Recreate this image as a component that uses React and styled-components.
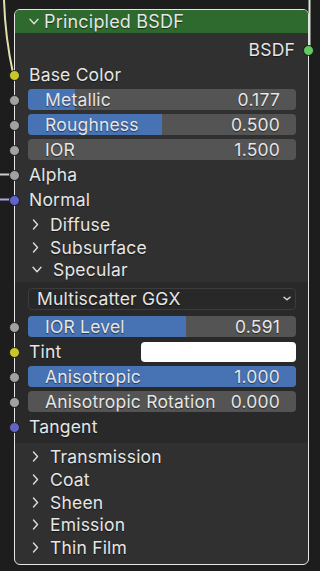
import React from 'react';
import styled, { createGlobalStyle } from 'styled-components';

const GlobalStyle = createGlobalStyle`
  html, body {
    margin: 0;
    background: #1d1d1d;
  }
  body {
    font-family: Inter, "Noto Sans", sans-serif;
  }
`;

const Canvas = styled.div`
  position: relative;
  width: 320px;
  height: 571px;
  overflow: hidden;
  padding: 9px 0 0 14px;
  box-sizing: border-box;
  background: #1d1d1d;
`;

const Wires = styled.svg`
  position: absolute;
  left: 0;
  top: 0;
  pointer-events: none;
`;

const Node = styled.div`
  position: relative;
  z-index: 1;
  width: 295px;
  box-sizing: border-box;
  border: 1px solid #e6e6e6;
  border-radius: 6px;
  background: #303030;
  color: #e6e6e6;
  font-size: 17.5px;
  letter-spacing: 0.2px;
  text-shadow: 0 1px 1px rgba(0, 0, 0, 0.55);
`;

const Header = styled.div`
  height: 23px;
  display: flex;
  align-items: center;
  gap: 5px;
  padding-left: 14px;
  font-size: 18px;
  background: #2e6a2e;
  border-radius: 5px 5px 0 0;
`;

const Body = styled.div`
  padding: 4px 0 5px;
`;

const Row = styled.div`
  position: relative;
  height: 25px;
  display: flex;
  align-items: center;
  justify-content: ${({ $output }) => ($output ? 'flex-end' : 'flex-start')};
  padding: ${({ $output }) => ($output ? '0 13px 0 0' : '0 12px 0 13px')};
`;

const Label = styled.span`
  padding-left: 1px;
  white-space: nowrap;
`;

const Socket = styled.span`
  position: absolute;
  top: 50%;
  ${({ $right }) => ($right ? 'right: -6px;' : 'left: -6px;')}
  width: 9px;
  height: 9px;
  margin-top: -5px;
  border-radius: 50%;
  background: ${({ $color }) => $color};
  border: 1px solid #1a1a1a;
`;

const Slider = styled.div`
  position: relative;
  flex: 1;
  height: 21px;
  border-radius: 4px;
  background: #545454;
  overflow: hidden;
  display: flex;
  align-items: center;
  justify-content: space-between;
  padding: 0 16px 0 17px;
`;

const Fill = styled.span`
  position: absolute;
  left: 0;
  top: 0;
  bottom: 0;
  background: #4772b3;
`;

const SliderText = styled.span`
  position: relative;
  white-space: nowrap;
`;

const Swatch = styled.span`
  margin-left: auto;
  width: 155px;
  height: 20px;
  border-radius: 4px;
  background: #ffffff;
`;

const Dropdown = styled.div`
  flex: 1;
  height: 22px;
  box-sizing: border-box;
  border: 1px solid #3c3c3c;
  border-radius: 4px;
  background: #282828;
  display: flex;
  align-items: center;
  justify-content: space-between;
  padding: 0 4px 0 8px;
`;

const PanelHeader = styled.div`
  height: 22.75px;
  display: flex;
  align-items: center;
  gap: 11px;
  padding-left: 17px;
`;

const Panel = styled.div`
  background: #292929;
  padding: 4px 0 4px;
  margin-top: 1px;
  margin-bottom: 2px;
`;

const Group = styled.div`
  margin-top: ${({ $gap }) => $gap || 0}px;
`;

const Chevron = ({ open, small }) => {
  if (open) {
    const w = small ? 8 : 10;
    const h = small ? 5 : 7;
    return (
      <svg width={w} height={h} viewBox={`0 0 ${w} ${h}`}>
        <path d={`M1 1.2 L${w / 2} ${h - 1.2} L${w - 1} 1.2`} fill="none" stroke="#dcdcdc" strokeWidth="1.4" strokeLinecap="round" strokeLinejoin="round" />
      </svg>
    );
  }
  return (
    <svg width="7" height="11" viewBox="0 0 7 11">
      <path d="M1.5 1 L5.5 5.5 L1.5 10" fill="none" stroke="#dcdcdc" strokeWidth="1.4" strokeLinecap="round" strokeLinejoin="round" />
    </svg>
  );
};

const COLORS = {
  color: '#c7c729',
  float: '#a1a1a1',
  vector: '#6363c7',
  shader: '#63c763',
};

const SliderRow = ({ label, value, fill }) => (
  <Row>
    <Socket $color={COLORS.float} />
    <Slider>
      {fill > 0 && <Fill style={{ width: `${fill * 100}%` }} />}
      <SliderText>{label}</SliderText>
      <SliderText>{value}</SliderText>
    </Slider>
  </Row>
);

const SocketRow = ({ label, type }) => (
  <Row>
    <Socket $color={COLORS[type]} />
    <Label>{label}</Label>
  </Row>
);

const PanelTitle = ({ title, open }) => (
  <PanelHeader>
    <Chevron open={open} />
    <span>{title}</span>
  </PanelHeader>
);

export default function App() {
  return (
    <>
      <GlobalStyle />
      <Canvas>
        <Wires width="320" height="571">
          <path d="M4 0 C5 30 9 55 13 73" fill="none" stroke="#e2dfae" strokeWidth="2" />
          <path d="M309.5 0 L309.5 48" fill="none" stroke="#d4ecd4" strokeWidth="2" />
          <path d="M0 174.5 L14 174.5" fill="none" stroke="#cfcfcf" strokeWidth="2" />
          <path d="M0 199.5 L14 199.5" fill="none" stroke="#a7a7e2" strokeWidth="2" />
        </Wires>
        <Node>
          <Header>
            <Chevron open />
            <span>Principled BSDF</span>
          </Header>
          <Body>
            <Row $output>
              <Label>BSDF</Label>
              <Socket $right $color={COLORS.shader} />
            </Row>
            <SocketRow label="Base Color" type="color" />
            <SliderRow label="Metallic" value="0.177" fill={0.177} />
            <SliderRow label="Roughness" value="0.500" fill={0.5} />
            <SliderRow label="IOR" value="1.500" fill={0} />
            <SocketRow label="Alpha" type="float" />
            <SocketRow label="Normal" type="vector" />
            <Group $gap={1}>
              <PanelTitle title="Diffuse" />
              <PanelTitle title="Subsurface" />
              <PanelTitle title="Specular" open />
            </Group>
            <Panel>
              <Row>
                <Dropdown>
                  <span>Multiscatter GGX</span>
                  <Chevron open small />
                </Dropdown>
              </Row>
              <Group $gap={3}>
                <SliderRow label="IOR Level" value="0.591" fill={0.591} />
                <Row>
                  <Socket $color={COLORS.color} />
                  <Label>Tint</Label>
                  <Swatch />
                </Row>
                <SliderRow label="Anisotropic" value="1.000" fill={1} />
                <SliderRow label="Anisotropic Rotation" value="0.000" fill={0} />
                <SocketRow label="Tangent" type="vector" />
              </Group>
            </Panel>
            <PanelTitle title="Transmission" />
            <PanelTitle title="Coat" />
            <PanelTitle title="Sheen" />
            <PanelTitle title="Emission" />
            <PanelTitle title="Thin Film" />
          </Body>
        </Node>
      </Canvas>
    </>
  );
}
